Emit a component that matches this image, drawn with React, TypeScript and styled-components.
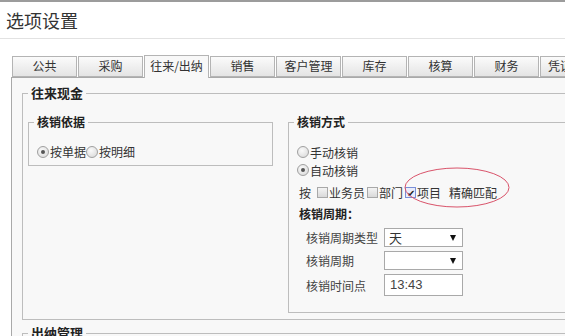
import React from 'react'
import styled, { createGlobalStyle } from 'styled-components'

// ── Global ─────────────────────────────────────────────────────────

const Global = createGlobalStyle`
  html, body { margin: 0; padding: 0; background: #fff; overflow: hidden; }
  body {
    font-family: "Noto Sans CJK SC", "Noto Sans", sans-serif;
    font-size: 12px;
    color: #333;
  }
`

// ── Styled ─────────────────────────────────────────────────────────

const Page = styled.div`
  width: 565px;
  height: 336px;
  overflow: hidden;
  box-sizing: border-box;
  border-top: 2px solid #9c9c9c;
`

const Header = styled.div`
  height: 36px;
  padding-left: 6px;
  border-bottom: 1px solid #e2e2e2;
  font-size: 18px;
  line-height: 36px;
  color: #333;
`

const TabArea = styled.div`
  margin-top: 17px;
  padding-left: 11px;
`

const TabRow = styled.div`
  display: flex;
  align-items: flex-end;
  height: 21px;
  padding-left: 1px;
  overflow: visible;
`

const Tab = styled.div<{ $active?: boolean; $clipped?: boolean }>`
  flex: none;
  box-sizing: border-box;
  width: ${(p) => (p.$clipped ? '90px' : '65px')};
  height: ${(p) => (p.$active ? '23px' : '21px')};
  margin-right: 1px;
  margin-bottom: ${(p) => (p.$active ? '-1px' : '0')};
  padding-left: ${(p) => (p.$clipped ? '7px' : '0')};
  border: 1px solid #b4b4b4;
  border-bottom: ${(p) => (p.$active ? 'none' : '1px solid #b4b4b4')};
  background: ${(p) => (p.$active ? '#f8f8f8' : 'linear-gradient(#fbfbfb, #e4e4e4)')};
  text-align: ${(p) => (p.$clipped ? 'left' : 'center')};
  line-height: ${(p) => (p.$active ? '20px' : '18px')};
  color: #333;
  position: relative;
  z-index: ${(p) => (p.$active ? 1 : 0)};
`

const Panel = styled.div`
  border-top: 1px solid #a9a9a9;
  border-left: 1px solid #a9a9a9;
  background: #f8f8f8;
  padding: 7px 0 0 10px;
  height: 300px;
`

const Group = styled.fieldset<{ $width?: number; $height?: number }>`
  margin: 0;
  padding: 0;
  min-width: 0;
  box-sizing: border-box;
  border: 1px solid #bdbdbd;
  width: ${(p) => (p.$width ? `${p.$width}px` : 'auto')};
  height: ${(p) => (p.$height ? `${p.$height}px` : 'auto')};
`

const Legend = styled.legend<{ $size?: number }>`
  margin-left: 5px;
  padding: 0 3px;
  font-weight: bold;
  font-size: ${(p) => p.$size ?? 12}px;
  line-height: 16px;
  color: #222;
`

const OuterBody = styled.div`
  display: flex;
  gap: 15px;
  padding: 13px 0 6px 5px;
`

const Options = styled.div`
  display: flex;
  align-items: center;
  padding: 13px 0 0 8px;
`

const Stack = styled.div`
  display: flex;
  flex-direction: column;
  padding: 13px 0 0 8px;
`

const Line = styled.label`
  display: flex;
  align-items: center;
  height: 18px;
  color: #333;
`

const Radio = styled.span<{ $checked?: boolean }>`
  flex: none;
  position: relative;
  width: 10px;
  height: 10px;
  margin-right: 1px;
  border: 1px solid #a0a0a0;
  border-radius: 50%;
  background: radial-gradient(circle at 40% 35%, #fafafa, #d6d6d6);
  &::after {
    content: '';
    display: ${(p) => (p.$checked ? 'block' : 'none')};
    position: absolute;
    left: 3px;
    top: 3px;
    width: 4px;
    height: 4px;
    border-radius: 50%;
    background: #555;
  }
`

const Check = styled.span<{ $checked?: boolean }>`
  flex: none;
  position: relative;
  box-sizing: border-box;
  width: 11px;
  height: 11px;
  margin: 0 1px 0 2px;
  border: 1px solid ${(p) => (p.$checked ? '#7a8fd6' : '#a8a8a8')};
  background: ${(p) => (p.$checked ? '#e8ecfb' : 'linear-gradient(#f4f4f4, #d9d9d9)')};
  color: #222;
  font-size: 10px;
  line-height: 9px;
  text-align: center;
`

const MatchRow = styled.div`
  position: relative;
  display: flex;
  align-items: center;
  height: 26px;
  padding-left: 2px;
`

const Spacer = styled.span<{ $w: number }>`
  display: inline-block;
  width: ${(p) => p.$w}px;
`

const Ring = styled.svg`
  position: absolute;
  left: 107px;
  top: -12px;
  overflow: visible;
  pointer-events: none;
`

const SubTitle = styled.div`
  margin-top: 1px;
  padding-left: 2px;
  font-weight: bold;
  line-height: 16px;
  color: #222;
`

const FormGrid = styled.div`
  display: grid;
  grid-template-columns: 78px 79px;
  row-gap: 4px;
  align-items: center;
  margin-top: 6px;
  padding-left: 9px;
`

const FieldLabel = styled.span`
  color: #444;
  line-height: 19px;
`

const Select = styled.div`
  box-sizing: border-box;
  display: flex;
  align-items: center;
  justify-content: space-between;
  height: 19px;
  padding: 0 6px 0 4px;
  border: 1px solid #a9a9a9;
  background: #fff;
  color: #333;
  font-size: 13px;
`

const Arrow = styled.span`
  width: 0;
  height: 0;
  margin-left: auto;
  border-left: 3.5px solid transparent;
  border-right: 3.5px solid transparent;
  border-top: 6px solid #111;
`

const TimeBox = styled.div`
  box-sizing: border-box;
  height: 22px;
  padding-left: 5px;
  border: 1px solid #a9a9a9;
  background: #fff;
  line-height: 20px;
  font-family: "Liberation Sans", Arial, sans-serif;
  font-size: 13px;
  color: #444;
`

const NextGroup = styled(Group)`
  margin-top: 5px;
  height: 40px;
`

// ── Data ───────────────────────────────────────────────────────────

const tabs = ['公共', '采购', '往来/出纳', '销售', '客户管理', '库存', '核算', '财务', '凭证']

// ── App ────────────────────────────────────────────────────────────

export default function App() {
  return (
    <Page>
      <Global />
      <Header>选项设置</Header>
      <TabArea>
        <TabRow>
          {tabs.map((t, i) => (
            <Tab key={t} $active={t === '往来/出纳'} $clipped={i === tabs.length - 1}>{t}</Tab>
          ))}
        </TabRow>
        <Panel>
          <Group $width={600}>
            <Legend $size={13}>往来现金</Legend>
            <OuterBody>
              <Group $width={245} $height={52}>
                <Legend>核销依据</Legend>
                <Options>
                  <Radio $checked />按单据
                  <Radio />按明细
                </Options>
              </Group>
              <Group $width={300} $height={199}>
                <Legend>核销方式</Legend>
                <Stack>
                  <Line><Radio />手动核销</Line>
                  <Line><Radio $checked />自动核销</Line>
                  <MatchRow>
                    按<Spacer $w={4} />
                    <Check />业务员
                    <Check />部门
                    <Check $checked>✔</Check>项目
                    <Spacer $w={8} />精确匹配
                    <Ring width="106" height="41">
                      <ellipse cx="53" cy="20.5" rx="52" ry="19.5" fill="none" stroke="#d9536a" strokeWidth="1" />
                    </Ring>
                  </MatchRow>
                  <SubTitle>核销周期：</SubTitle>
                  <FormGrid>
                    <FieldLabel>核销周期类型</FieldLabel>
                    <Select>天<Arrow /></Select>
                    <FieldLabel>核销周期</FieldLabel>
                    <Select><Arrow /></Select>
                    <FieldLabel>核销时间点</FieldLabel>
                    <TimeBox>13:43</TimeBox>
                  </FormGrid>
                </Stack>
              </Group>
            </OuterBody>
          </Group>
          <NextGroup $width={600}>
            <Legend $size={13}>出纳管理</Legend>
          </NextGroup>
        </Panel>
      </TabArea>
    </Page>
  )
}
